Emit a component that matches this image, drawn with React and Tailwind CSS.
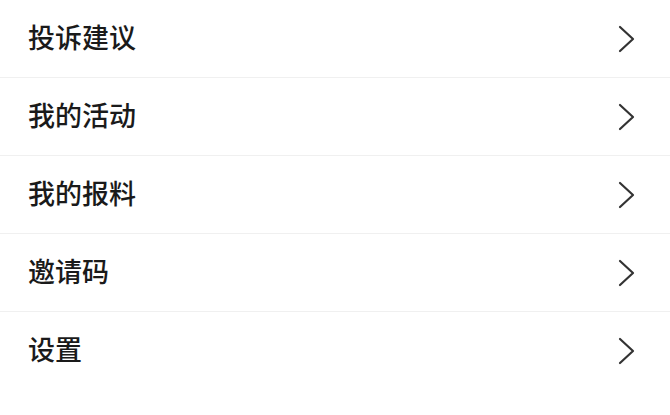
import React from "react";

const items = ["投诉建议", "我的活动", "我的报料", "邀请码", "设置"];

const Chevron = () => (
  <svg width="20" height="28" viewBox="0 0 20 28" fill="none">
    <path
      d="M3 2 L16 14 L3 26"
      stroke="#333"
      strokeWidth="2.2"
      strokeLinecap="round"
      strokeLinejoin="round"
    />
  </svg>
);

const App = () => {
  return (
    <div
      className="w-[670px] h-[415px] bg-white overflow-hidden"
      style={{ fontFamily: '"Noto Sans CJK SC", "Noto Sans", sans-serif' }}
    >
      {items.map((item, i) => (
        <div
          key={item}
          className={`flex items-center justify-between h-[78px] pl-[28px] pr-[33px] ${
            i < items.length - 1 ? "border-b border-[#f0f0f0]" : ""
          }`}
        >
          <span className="text-[27px] font-medium text-[#1a1a1a] leading-none pb-[5px]">
            {item}
          </span>
          <Chevron />
        </div>
      ))}
    </div>
  );
};

export default App;
